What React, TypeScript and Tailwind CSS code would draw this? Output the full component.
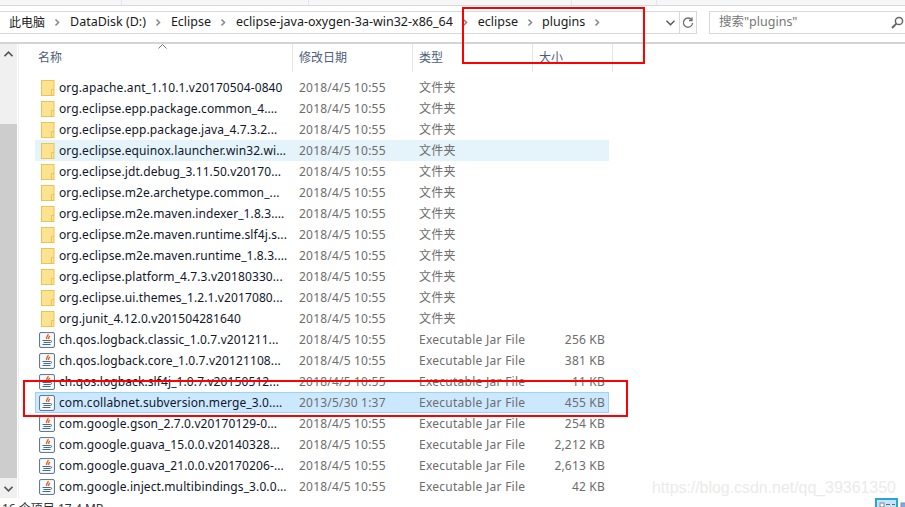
const folders = [
  'org.apache.ant_1.10.1.v20170504-0840',
  'org.eclipse.epp.package.common_4....',
  'org.eclipse.epp.package.java_4.7.3.2...',
  'org.eclipse.equinox.launcher.win32.wi...',
  'org.eclipse.jdt.debug_3.11.50.v20170...',
  'org.eclipse.m2e.archetype.common_...',
  'org.eclipse.m2e.maven.indexer_1.8.3....',
  'org.eclipse.m2e.maven.runtime.slf4j.s...',
  'org.eclipse.m2e.maven.runtime_1.8.3....',
  'org.eclipse.platform_4.7.3.v20180330...',
  'org.eclipse.ui.themes_1.2.1.v2017080...',
  'org.junit_4.12.0.v201504281640',
];

const jars = [
  { name: 'ch.qos.logback.classic_1.0.7.v201211...', date: '2018/4/5 10:55', size: '256 KB' },
  { name: 'ch.qos.logback.core_1.0.7.v20121108...', date: '2018/4/5 10:55', size: '381 KB' },
  { name: 'ch.qos.logback.slf4j_1.0.7.v20150512...', date: '2018/4/5 10:55', size: '11 KB' },
  { name: 'com.collabnet.subversion.merge_3.0....', date: '2013/5/30 1:37', size: '455 KB' },
  { name: 'com.google.gson_2.7.0.v20170129-0...', date: '2018/4/5 10:55', size: '254 KB' },
  { name: 'com.google.guava_15.0.0.v20140328...', date: '2018/4/5 10:55', size: '2,212 KB' },
  { name: 'com.google.guava_21.0.0.v20170206-...', date: '2018/4/5 10:55', size: '2,613 KB' },
  { name: 'com.google.inject.multibindings_3.0.0...', date: '2018/4/5 10:55', size: '42 KB' },
];

function Chevron() {
  return (
    <svg className="w-[7px] h-[9px] shrink-0" viewBox="0 0 7 9" fill="none" stroke="#8a8a8a" strokeWidth="1.6">
      <path d="M1.5 1.5l3 3-3 3" />
    </svg>
  );
}

function FolderIcon() {
  return (
    <svg className="w-[14px] h-[16px] shrink-0" viewBox="0 0 14 16">
      <rect x="0.5" y="0.5" width="12.5" height="15" fill="#fde28f" stroke="#eac457" />
      <path d="M10.5 15.5V9.5H13" fill="none" stroke="#eac457" />
    </svg>
  );
}

function JarIcon() {
  return (
    <svg className="w-[16px] h-[16px] shrink-0 -ml-[2px]" viewBox="0 0 16 16" fill="none">
      <rect x="0.5" y="0.5" width="15" height="15" rx="1.5" fill="#e4eaf0" stroke="#5f7b95" />
      <rect x="1.5" y="1.5" width="13" height="13" rx="1" fill="#f7f9fb" />
      <path d="M9 2c.9 1.6-2.6 2.6-1.1 5M11 4c-1.1.8-2 1.4-1.2 3" stroke="#e9641c" strokeWidth="1.4" />
      <path d="M3.5 8.5h8M4.5 10.5h7M3.5 12.5h8" stroke="#45688f" strokeWidth="1.1" />
      <path d="M11.5 8.5c1.4 0 1.4 1.8 0 2" stroke="#45688f" />
    </svg>
  );
}

function Row({ icon, name, date, type, size, rowClass }: { icon: React.ReactNode; name: string; date: string; type: string; size?: string; rowClass?: string }) {
  return (
    <div className={`flex items-center h-[21px] w-[574px] pl-[5px] text-[12px] ${rowClass ?? 'border border-transparent'}`}>
      <div className="w-[18px] flex justify-start">{icon}</div>
      <div className="w-[240px] text-[#10172b] tracking-[0.1px] whitespace-nowrap">{name}</div>
      <div className="w-[120px] text-[#6d6d6d] tracking-[0.2px] whitespace-nowrap">{date}</div>
      <div className="w-[122px] text-[#6d6d6d] tracking-[0.26px] whitespace-nowrap">{type}</div>
      <div className="w-[64px] text-right text-[#6d6d6d] tracking-[0.2px] whitespace-nowrap">{size}</div>
    </div>
  );
}

export default function App() {
  return (
    <div className="relative w-[905px] h-[507px] overflow-hidden bg-white text-[12px] font-['Noto_Sans','Noto_Sans_CJK_SC',sans-serif]">
      {/* ribbon leftovers */}
      <div className="flex h-[6px] bg-[#f5f6f7] border-b border-[#d9d9d9]">
        <div className="w-[122px] border-r border-[#e6e6e6]" />
        <div className="w-[187px] border-r border-[#e6e6e6]" />
        <div className="w-[263px] border-r border-[#e6e6e6]" />
        <div className="w-[85px] border-r border-[#e6e6e6]" />
      </div>

      {/* address + search */}
      <div className="flex items-start h-[38px] border-b-2 border-[#d4d4d4] pt-[5px]">
        <div className="flex items-center h-[23px] w-[697px] border-y border-r border-[#d9d9d9] pl-[9px] text-[#1a1a1a]">
          <div className="flex items-center gap-[9px] flex-1 text-[12.5px] whitespace-nowrap">
            <span className="text-[12px]">此电脑</span>
            <Chevron />
            <span>DataDisk (D:)</span>
            <Chevron />
            <span>Eclipse</span>
            <Chevron />
            <span>eclipse-java-oxygen-3a-win32-x86_64</span>
            <Chevron />
            <span>eclipse</span>
            <Chevron />
            <span className="-ml-[1px]">plugins</span>
            <Chevron />
          </div>
          <svg className="w-[9px] h-[6px] mr-[4px]" viewBox="0 0 9 6" fill="none" stroke="#555" strokeWidth="1.4">
            <path d="M.5.8l4 4 4-4" />
          </svg>
          <div className="flex items-center justify-center w-[17px] h-full border-l border-[#d9d9d9]">
            <svg className="w-[12px] h-[12px]" viewBox="0 0 12 12" fill="none" stroke="#6e6e6e" strokeWidth="1.3">
              <path d="M9.8 3a4.6 4.6 0 1 0 .8 3" />
              <path d="M10 .5v3H7" />
            </svg>
          </div>
        </div>
        <div className="flex items-center justify-between h-[23px] w-[196px] ml-[12px] border-y border-l border-[#d9d9d9] pl-[9px] pr-[1px] text-[#767676] text-[12.5px]">
          <span>搜索"plugins"</span>
          <svg className="w-[13px] h-[13px]" viewBox="0 0 13 13" fill="none" stroke="#666" strokeWidth="1.5">
            <circle cx="8" cy="5" r="3.6" />
            <path d="M5.4 7.6L1 12" strokeWidth="2" />
          </svg>
        </div>
      </div>

      <div className="flex h-[463px]">
        {/* scrollbar */}
        <div className="flex flex-col w-[17px] h-[454px] bg-[#f0f0f0] shrink-0">
          <div className="flex items-center justify-center h-[17px] pt-[3px]">
            <svg className="w-[9px] h-[6px]" viewBox="0 0 9 6" fill="none" stroke="#555" strokeWidth="1.6">
              <path d="M.5 5.2l4-4 4 4" />
            </svg>
          </div>
          <div className="mt-[63px] h-[354px] bg-[#cdcdcd]" />
          <div className="flex items-center justify-center h-[20px] pt-[2px]">
            <svg className="w-[9px] h-[6px]" viewBox="0 0 9 6" fill="none" stroke="#555" strokeWidth="1.6">
              <path d="M.5.8l4 4 4-4" />
            </svg>
          </div>
        </div>

        <div className="w-[2px] h-[454px] border-r border-[#f0f0f0] shrink-0" />

        <div className="flex-1 pl-[16px]">
          {/* column headers */}
          <div className="relative flex h-[28px] text-[#4c607a] text-[12px]">
            <div className="relative flex items-center w-[258px] h-[28px] pl-[3px] border-r border-[#e5e5e5]">
              名称
              <svg className="absolute left-[123px] top-0 w-[9px] h-[5px]" viewBox="0 0 9 5" fill="none" stroke="#777">
                <path d="M.5 4.5l4-4 4 4" />
              </svg>
            </div>
            <div className="flex items-center w-[120px] h-[28px] pl-[6px] border-r border-[#e5e5e5]">修改日期</div>
            <div className="flex items-center w-[120px] h-[28px] pl-[6px] border-r border-[#e5e5e5]">类型</div>
            <div className="flex items-center w-[80px] h-[28px] pl-[6px] border-r border-[#e5e5e5]">大小</div>
          </div>

          {/* file rows */}
          <div className="pt-[5px]">
            {folders.map((name, i) => (
              <Row
                key={name}
                icon={<FolderIcon />}
                name={name}
                date="2018/4/5 10:55"
                type="文件夹"
                rowClass={i === 3 ? 'bg-[#e5f3fb] border border-[#e5f3fb]' : undefined}
              />
            ))}
            {jars.map((jar, i) => (
              <Row
                key={jar.name}
                icon={<JarIcon />}
                name={jar.name}
                date={jar.date}
                type="Executable Jar File"
                size={jar.size}
                rowClass={i === 3 ? 'bg-[#cce8ff] border border-[#99d1ff]' : undefined}
              />
            ))}
          </div>
        </div>
      </div>

      {/* status bar, cut off by the crop */}
      <div className="absolute left-[2px] top-[502px] text-[12px] leading-[14px] text-[#333] whitespace-nowrap">16 个项目 17.4 MB</div>
      <svg className="absolute left-[875px] top-[498px] w-[30px] h-[9px]" viewBox="0 0 30 9" fill="none">
        <rect x="1" y="1" width="21" height="10" fill="#c6e4f5" stroke="#2ba4dc" strokeWidth="2" />
        <rect x="5" y="5" width="4" height="4" fill="#fff" stroke="#7d8a96" />
        <path d="M11 6.5h4M17 6.5h3" stroke="#5d6b78" />
        <rect x="26" y="5" width="5" height="5" fill="#7fa8e8" stroke="#8d8d8d" />
      </svg>

      {/* red annotation boxes */}
      <div className="absolute left-[462px] top-[7px] w-[183px] h-[57px] border-2 border-[#ff0000]" />
      <div className="absolute left-[23px] top-[380px] w-[605px] h-[37px] border-2 border-[#ff0000]" />

      {/* blog watermark */}
      <div className="absolute left-[652px] top-[478px] text-[16px] leading-[20px] text-[#ebebeb] tracking-[-0.05px] font-['Liberation_Sans',sans-serif] whitespace-nowrap">https://blog.csdn.net/qq_39361350</div>
    </div>
  );
}
